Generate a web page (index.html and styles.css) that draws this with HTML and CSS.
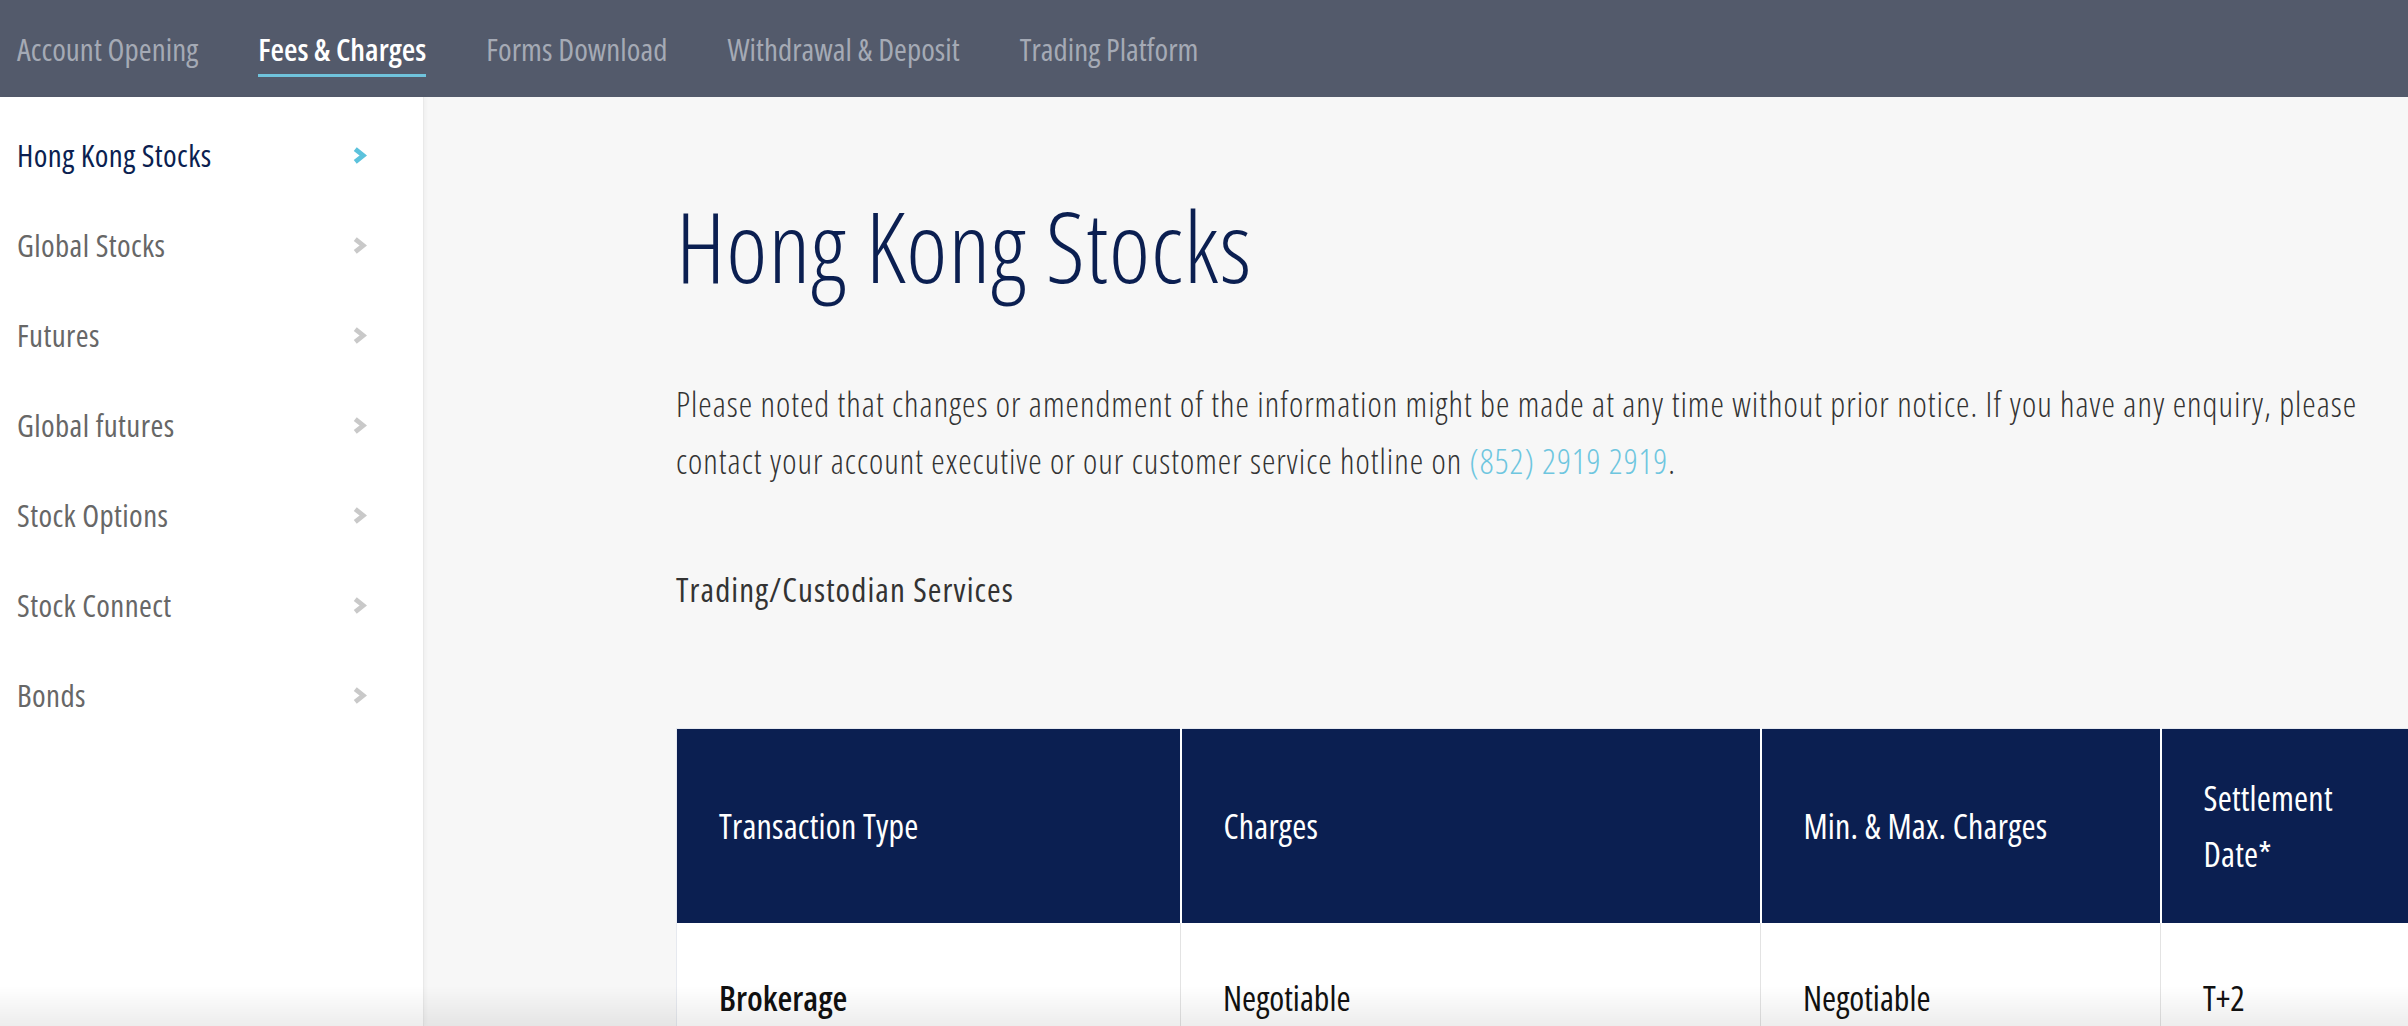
FILE: index.html
```html
<!DOCTYPE html>
<html lang="en">
<head>
<meta charset="utf-8">
<title>Fees &amp; Charges - Hong Kong Stocks</title>
<link rel="stylesheet" href="styles.css">
</head>
<body>
<header class="topnav">
  <a class="nav-link" href="#">Account Opening</a>
  <a class="nav-link active" href="#">Fees &amp; Charges</a>
  <a class="nav-link" href="#">Forms Download</a>
  <a class="nav-link" href="#">Withdrawal &amp; Deposit</a>
  <a class="nav-link" href="#">Trading Platform</a>
</header>
<div class="layout">
  <aside class="sidebar">
    <a class="side-item active" href="#"><span>Hong Kong Stocks</span><svg class="chev" viewBox="0 0 14 16"><polyline points="3,2 10.5,8 3,14"/></svg></a>
    <a class="side-item" href="#"><span>Global Stocks</span><svg class="chev" viewBox="0 0 14 16"><polyline points="3,2 10.5,8 3,14"/></svg></a>
    <a class="side-item" href="#"><span>Futures</span><svg class="chev" viewBox="0 0 14 16"><polyline points="3,2 10.5,8 3,14"/></svg></a>
    <a class="side-item" href="#"><span>Global futures</span><svg class="chev" viewBox="0 0 14 16"><polyline points="3,2 10.5,8 3,14"/></svg></a>
    <a class="side-item" href="#"><span>Stock Options</span><svg class="chev" viewBox="0 0 14 16"><polyline points="3,2 10.5,8 3,14"/></svg></a>
    <a class="side-item" href="#"><span>Stock Connect</span><svg class="chev" viewBox="0 0 14 16"><polyline points="3,2 10.5,8 3,14"/></svg></a>
    <a class="side-item" href="#"><span>Bonds</span><svg class="chev" viewBox="0 0 14 16"><polyline points="3,2 10.5,8 3,14"/></svg></a>
  </aside>
  <main class="content">
    <h1 class="title">Hong Kong Stocks</h1>
    <p class="notice">Please noted that changes or amendment of the information might be made at any time without prior notice. If you have any enquiry, please contact your account executive or our customer service hotline on <a class="phone" href="#">(852) 2919 2919</a>.</p>
    <h2 class="subtitle">Trading/Custodian Services</h2>
    <table class="fees">
      <colgroup>
        <col class="c1"><col class="c2"><col class="c3"><col class="c4">
      </colgroup>
      <thead>
        <tr>
          <th>Transaction Type</th>
          <th>Charges</th>
          <th>Min. &amp; Max. Charges</th>
          <th>Settlement Date*</th>
        </tr>
      </thead>
      <tbody>
        <tr>
          <td class="type">Brokerage</td>
          <td>Negotiable</td>
          <td>Negotiable</td>
          <td>T+2</td>
        </tr>
      </tbody>
    </table>
  </main>
</div>
<div class="bottom-fade"></div>
</body>
</html>
```
FILE: styles.css
```css
html, body {
  margin: 0;
  padding: 0;
  height: 100%;
}
body {
  font-family: "Open Sans", "Liberation Sans Narrow", sans-serif;
  font-stretch: 75%;
  background: #f7f7f7;
  overflow: hidden;
}
a {
  text-decoration: none;
}

/* top navigation */
.topnav {
  height: 97px;
  box-sizing: border-box;
  background: #535a6b;
  display: flex;
  align-items: flex-start;
  gap: 60px;
  padding-left: 17px;
}
.nav-link {
  display: block;
  font-size: 31px;
  font-weight: 500;
  letter-spacing: 0.05px;
  line-height: 36px;
  padding: 31px 0 7px;
  color: #a5aab5;
  border-bottom: 3px solid transparent;
}
.nav-link.active {
  color: #ffffff;
  font-weight: 600;
  letter-spacing: 0;
  border-bottom-color: #6fc3dc;
}

/* layout */
.layout {
  display: flex;
  height: calc(100% - 97px);
}
.sidebar {
  width: 424px;
  flex: none;
  box-sizing: border-box;
  background: #ffffff;
  border-right: 1px solid #e9e9e9;
  box-shadow: 2px 0 4px rgba(0, 0, 0, 0.03);
  padding-top: 13px;
  display: flex;
  flex-direction: column;
}
.side-item {
  height: 90px;
  display: flex;
  align-items: center;
  justify-content: space-between;
  padding: 0 56px 0 17px;
  font-size: 31px;
  font-weight: 500;
  letter-spacing: 0.4px;
  color: #676767;
}
.side-item.active {
  color: #0b1f51;
}
.chev {
  width: 15px;
  height: 17px;
  fill: none;
  stroke: #c9c9c9;
  stroke-width: 4.5;
  stroke-linejoin: miter;
  stroke-linecap: butt;
}
.side-item.active .chev {
  stroke: #5cc2dc;
}

/* content */
.content {
  flex: 1;
  min-width: 0;
  overflow: hidden;
  padding-left: 252px;
  padding-top: 89px;
}
.title {
  margin: 0;
  font-size: 98px;
  font-weight: 300;
  letter-spacing: 1px;
  line-height: 118px;
  color: #0b1f51;
}
.notice {
  margin: 72px 0 0;
  max-width: 1730px;
  font-size: 34px;
  font-weight: 300;
  letter-spacing: 1px;
  line-height: 57px;
  color: #333333;
}
.phone {
  color: #6ec6df;
}
.subtitle {
  margin: 80px 0 0;
  font-size: 33px;
  font-weight: 400;
  letter-spacing: 1.1px;
  line-height: 40px;
  color: #333333;
}

/* table */
.fees {
  margin-top: 118px;
  border-collapse: collapse;
  table-layout: fixed;
  width: 1764px;
  border-top: 1px solid #e6e9ef;
  border-left: 1px solid #e6e9ef;
}
.c1 { width: 504px; }
.c2 { width: 580px; }
.c3 { width: 400px; }
.c4 { width: 280px; }
.fees th {
  background: #0b1f51;
  color: #ffffff;
  font-size: 34px;
  font-weight: 400;
  letter-spacing: 0.2px;
  line-height: 56px;
  text-align: left;
  height: 194px;
  box-sizing: border-box;
  padding: 0 42px;
  border-right: 2px solid #ffffff;
  vertical-align: middle;
}
.fees td {
  background: #ffffff;
  color: #111111;
  font-size: 34px;
  font-weight: 400;
  line-height: 56px;
  padding: 47px 42px;
  border-right: 1px solid #e3e3e3;
  vertical-align: top;
}
.fees td.type {
  font-weight: 600;
}

.bottom-fade {
  position: fixed;
  left: 0;
  right: 0;
  bottom: 0;
  height: 40px;
  background: linear-gradient(to bottom, rgba(0, 0, 0, 0), rgba(0, 0, 0, 0.07));
  pointer-events: none;
}
```
